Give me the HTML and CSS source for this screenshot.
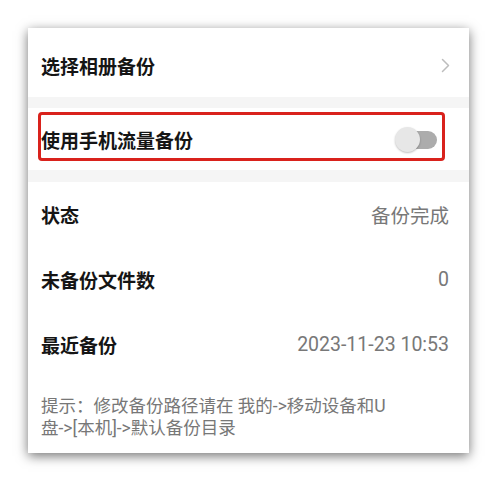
FILE: index.html
```html
<!DOCTYPE html>
<html lang="zh-CN">
<head>
<meta charset="utf-8">
<title>备份设置</title>
<link rel="stylesheet" href="styles.css">
</head>
<body>
<div class="card">
  <div class="row row-first">
    <span class="title">选择相册备份</span>
    <svg class="chev" width="9" height="15" viewBox="0 0 9 15"><path d="M1.5 1.5 L7.5 7.5 L1.5 13.5" fill="none" stroke="#bdbdbd" stroke-width="1.5" stroke-linecap="round" stroke-linejoin="round"/></svg>
  </div>
  <div class="gap"></div>
  <div class="row row-toggle">
    <span class="title">使用手机流量备份</span>
    <span class="toggle"><span class="track"></span><span class="knob"></span></span>
    <div class="highlight"></div>
  </div>
  <div class="gap gap-small"></div>
  <div class="row">
    <span class="title">状态</span>
    <span class="value">备份完成</span>
  </div>
  <div class="row">
    <span class="title">未备份文件数</span>
    <span class="value">0</span>
  </div>
  <div class="row">
    <span class="title">最近备份</span>
    <span class="value">2023-11-23 10:53</span>
  </div>
  <p class="hint">提示：修改备份路径请在 我的-&gt;移动设备和U盘-&gt;[本机]-&gt;默认备份目录</p>
</div>
</body>
</html>
```
FILE: styles.css
```css
html, body {
  margin: 0;
  padding: 0;
  background: #ffffff;
}
body {
  font-family: Roboto, "Noto Sans CJK SC", sans-serif;
  width: 499px;
  height: 483px;
  overflow: hidden;
}
.card {
  margin: 28px 0 0 28px;
  width: 441px;
  height: 425px;
  background: #ffffff;
  box-shadow: 0 3px 11px rgba(0, 0, 0, 0.55);
  display: flex;
  flex-direction: column;
}
.row {
  position: relative;
  display: flex;
  align-items: center;
  justify-content: space-between;
  height: 65px;
  padding: 0 20px 0 13px;
  box-sizing: border-box;
  flex-shrink: 0;
}
.row-first {
  height: 69px;
  padding-top: 5px;
  padding-right: 19px;
}
.row-toggle {
  height: 62px;
  padding-top: 1px;
}
.gap {
  height: 11px;
  background: #f5f5f5;
  flex-shrink: 0;
}
.gap-small {
  height: 12px;
}
.title {
  font-size: 19px;
  font-weight: 700;
  color: #151515;
}
.value {
  font-size: 19.5px;
  color: #787878;
}
.chev {
  display: block;
}
.toggle {
  position: relative;
  width: 42px;
  height: 26px;
  margin-right: 12px;
}
.track {
  position: absolute;
  left: 4px;
  top: 4px;
  width: 38px;
  height: 18px;
  border-radius: 9px;
  background: #acacac;
}
.knob {
  position: absolute;
  left: 0;
  top: 0;
  width: 25px;
  height: 25px;
  border-radius: 50%;
  background: #e7e7e7;
  box-shadow: 0 1px 2px rgba(0, 0, 0, 0.25);
}
.highlight {
  position: absolute;
  left: 10px;
  top: 4px;
  width: 407px;
  height: 49px;
  box-sizing: border-box;
  border: 3px solid #d9221c;
  border-radius: 4px;
}
.hint {
  margin: 0;
  padding: 19px 0 0 13px;
  width: 362px;
  font-size: 17.5px;
  line-height: 21.5px;
  color: #777777;
}
```
